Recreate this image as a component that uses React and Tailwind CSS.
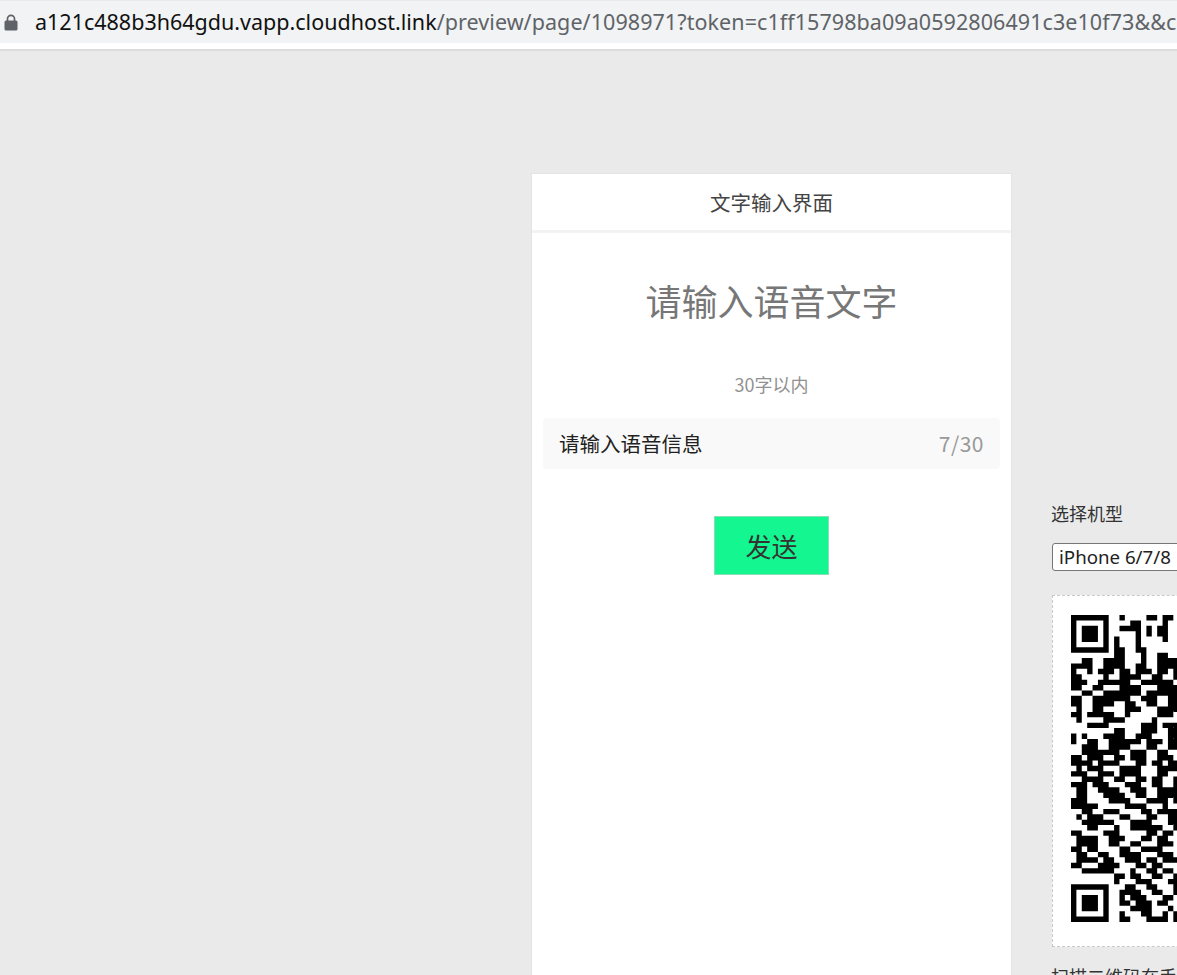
import React from 'react';

const cjk = { fontFamily: '"Noto Sans CJK SC", "Noto Sans", sans-serif' };

// left part of the code, the rest runs off the window
const qrRows = [
  '11111110010000110110',
  '10000010000110000100',
  '10111010011110101100',
  '10111010000010101100',
  '10111010100010000100',
  '10000010100010000000',
  '11111110110011000000',
  '00000000110001001100',
  '00110011110001001111',
  '11110011110011001111',
  '10010111011011101101',
  '11000010011110011001',
  '11100111111001111110',
  '11001100011110001111',
  '00110011111110111111',
  '11001111111001110011',
  '11001111001100110011',
  '01001100001110001111',
  '11011111001000001110',
  '01000011110000010000',
  '00011110000001110111',
  '00000000110001110011',
  '10100011110011100011',
  '10011001111110111011',
  '00111001111000110011',
  '00111111100111001100',
  '11011100110111001110',
  '11110111100011011011',
  '01011100011110001111',
  '11100111011110001100',
  '00111100110011011001',
  '11101110001110011001',
  '01100111100111001111',
  '01100011110011001111',
  '11100001111000111101',
  '11111000001111000100',
  '00110011100001101111',
  '01011100011000110011',
  '00111111000111100011',
  '00011000100111111001',
  '11000011100000110110',
  '01111001110001101100',
  '01111001100110001110',
  '11011000011001111000',
  '01100110011110001110',
  '01111011001110110111',
  '11000111100011011000',
  '00111111000100110110',
  '00000000110110011001',
  '00000000100011100011',
  '11111110001100110001',
  '10000010011110011001',
  '10111010010111000110',
  '10111010011011101100',
  '10111010000111100010',
  '10000010010001100101',
  '11111110011000111101',
];

// one path so neighbouring modules have no seams between them
const qrPath = qrRows
  .map((row, y) =>
    row
      .split('')
      .map((cell, x) => (cell === '1' ? `M${x} ${y}h1v1h-1z` : ''))
      .join('')
  )
  .join('');

function QrCode() {
  return (
    <svg width="307" height="307" viewBox="0 0 57 57" className="block shrink-0">
      <path d={qrPath} fill="#000" />
    </svg>
  );
}

function LockIcon() {
  return (
    <svg width="14" height="17" viewBox="0 0 14 17" className="shrink-0 text-[#5f6368]">
      <path d="M3.5 7V4.8a3.5 3.5 0 0 1 7 0V7" fill="none" stroke="currentColor" strokeWidth="1.7" />
      <rect x="0.5" y="6.5" width="13" height="10" rx="1.5" fill="currentColor" />
    </svg>
  );
}

function AddressBar() {
  return (
    <div className="bg-white">
      <div className="flex items-center h-[42px] mt-px bg-[#f1f3f4] pl-[4px] overflow-hidden whitespace-nowrap" style={{ fontFamily: '"Noto Sans", sans-serif' }}>
        <LockIcon />
        <div className="ml-[17px] text-[21.5px] text-[#5f6368]">
          <span className="text-[#111]">a121c488b3h64gdu.vapp.cloudhost.link</span>
          <span className="tracking-[0.07px]">/preview/page/1098971?token=c1ff15798ba09a0592806491c3e10f73&amp;&amp;c</span>
        </div>
      </div>
      <div className="h-[6px]" />
      <div className="h-[2px] bg-[#dcdcdc]" />
    </div>
  );
}

function Phone() {
  return (
    <div className="w-[481px] h-[900px] shrink-0 bg-white border border-[#e4e4e4]" style={cjk}>
      <div className="h-[56px] flex items-center justify-center text-[20.5px] text-[#444] border-b-[3px] border-[#f3f3f3] box-content">
        文字输入界面
      </div>
      <div className="flex flex-col items-center">
        <div className="mt-[40px] text-[36px] leading-[54px] text-[#777]">请输入语音文字</div>
        <div className="mt-[43px] text-[18px] leading-[28px] text-[#919191]">30字以内</div>
        <div className="mt-[20px] self-start ml-[11px] w-[457px] h-[51px] px-[16px] flex items-center justify-between bg-[#f9f9f9] rounded">
          <span className="text-[20.5px] text-[#222]">请输入语音信息</span>
          <span className="text-[21px] tracking-[0.5px] text-[#999]">7/30</span>
        </div>
        <button className="mt-[47px] w-[115px] h-[59px] flex items-center justify-center bg-[#14f68f] border border-[#86dfb5] text-[26px] text-[#333]">
          发送
        </button>
      </div>
    </div>
  );
}

function SidePanel() {
  return (
    <div className="ml-[39px] pt-[325px] w-[360px] shrink-0" style={cjk}>
      <div className="text-[18px] leading-[30px] text-[#333]">选择机型</div>
      <div className="mt-[15px] ml-px h-[28px] w-[200px] border border-[#767676] rounded-[3px] bg-white flex items-center pl-[6px] text-[18.7px] text-[#222]" style={{ fontFamily: '"Noto Sans", sans-serif' }}>
        iPhone 6/7/8
      </div>
      <div className="mt-[24px] ml-px w-[352px] h-[352px] bg-white border border-dashed border-[#c8c8c8] pl-[18px] pt-[19px]">
        <QrCode />
      </div>
      <div className="mt-[14px] text-[18px] leading-[30px] text-[#333] whitespace-nowrap">扫描二维码在手机上预览</div>
    </div>
  );
}

export default function App() {
  return (
    <div className="w-[1177px] h-[975px] overflow-hidden bg-[#eaeaea]">
      <AddressBar />
      <div className="flex pl-[531px] pt-[122px]">
        <Phone />
        <SidePanel />
      </div>
    </div>
  );
}
